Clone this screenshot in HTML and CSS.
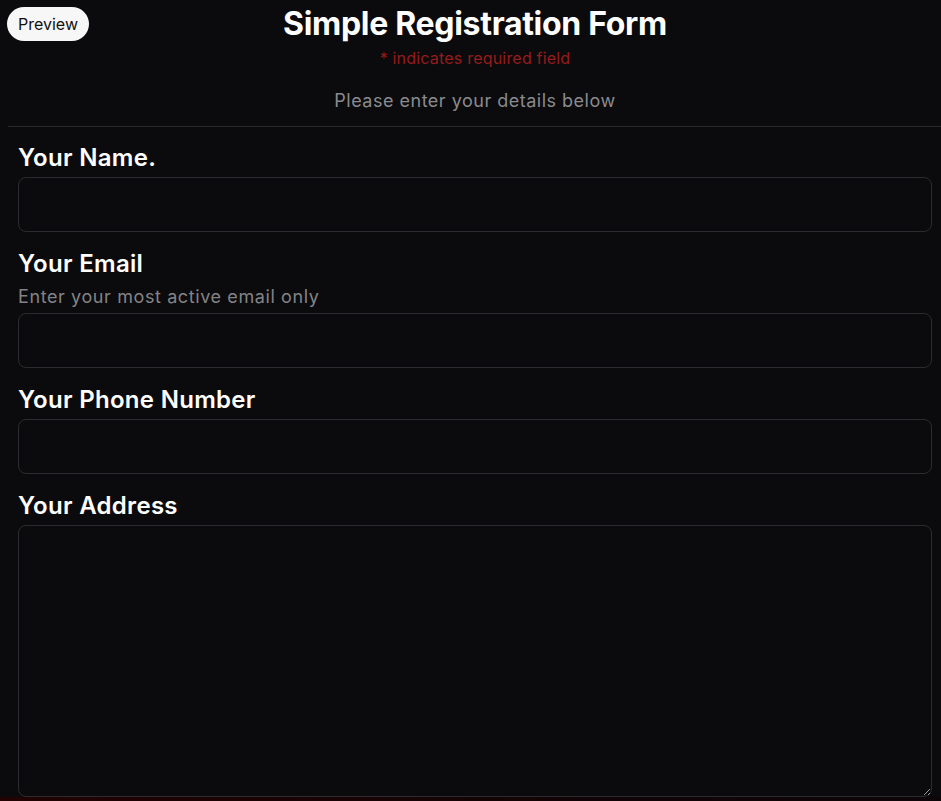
FILE: index.html
```html
<!DOCTYPE html>
<html lang="en">
<head>
<meta charset="utf-8">
<title>Simple Registration Form</title>
<link rel="stylesheet" href="styles.css">
</head>
<body>
<button class="preview" type="button">Preview</button>
<main class="page">
  <header class="head">
    <h1 class="title">Simple Registration Form</h1>
    <p class="required">* indicates required field</p>
    <p class="intro">Please enter your details below</p>
  </header>
  <form class="form">
    <div class="field">
      <label class="label" for="name">Your Name.</label>
      <input class="input" id="name" type="text">
    </div>
    <div class="field">
      <label class="label" for="email">Your Email</label>
      <p class="help">Enter your most active email only</p>
      <input class="input" id="email" type="email">
    </div>
    <div class="field">
      <label class="label" for="phone">Your Phone Number</label>
      <input class="input" id="phone" type="tel">
    </div>
    <div class="field">
      <label class="label" for="address">Your Address</label>
      <textarea class="input area" id="address"></textarea>
    </div>
  </form>
  <div class="strip"></div>
</main>
</body>
</html>
```
FILE: styles.css
```css
html, body {
  background: #0b0b0d;
}
body {
  margin: 0;
  padding: 0 0 0 8px;
  font-family: Inter, "Noto Sans", sans-serif;
  color: #ffffff;
  overflow: hidden;
}
.preview {
  position: absolute;
  left: 7px;
  top: 7px;
  width: 82px;
  height: 34px;
  border: none;
  border-radius: 17px;
  background: #f7f7f7;
  color: #111;
  font-family: Inter, "Noto Sans", sans-serif;
  font-size: 16px;
  padding: 0;
}
.page {
  width: 934px;
}
.head {
  text-align: center;
  border-bottom: 1px solid #2a2a2c;
  padding-top: 5px;
  padding-bottom: 13px;
}
.title {
  margin: 0;
  font-size: 32px;
  line-height: 38px;
  font-weight: 700;
  letter-spacing: -0.3px;
}
.required {
  margin: 5px 0 0;
  font-size: 16px;
  line-height: 20px;
  color: #951c1c;
  letter-spacing: 0.2px;
}
.intro {
  margin: 21px 0 0;
  font-size: 18px;
  line-height: 24px;
  color: #8a8a8e;
  letter-spacing: 0.5px;
}
.form {
  padding: 16px 10px 0;
  display: flex;
  flex-direction: column;
  gap: 17px;
}
.field {
  display: flex;
  flex-direction: column;
}
.label {
  font-size: 24px;
  line-height: 28px;
  font-weight: 600;
  letter-spacing: 0.3px;
  padding-top: 1px;
  margin-bottom: 5px;
}
.help {
  margin: 2px 0 4px;
  font-size: 18px;
  line-height: 24px;
  color: #838387;
  letter-spacing: 0.6px;
}
.input {
  box-sizing: border-box;
  width: 100%;
  height: 55px;
  margin: 0;
  background: #0b0b0d;
  border: 1px solid #2c2c30;
  border-radius: 8px;
  color: #fff;
  font-family: inherit;
  font-size: 16px;
  padding: 8px 12px;
}
.area {
  height: 272px;
  resize: vertical;
}
.strip {
  height: 8px;
  margin-left: -8px;
  margin-right: -1px;
  background: linear-gradient(to right, #220202, #120406 60%, #0d0608);
}
```
